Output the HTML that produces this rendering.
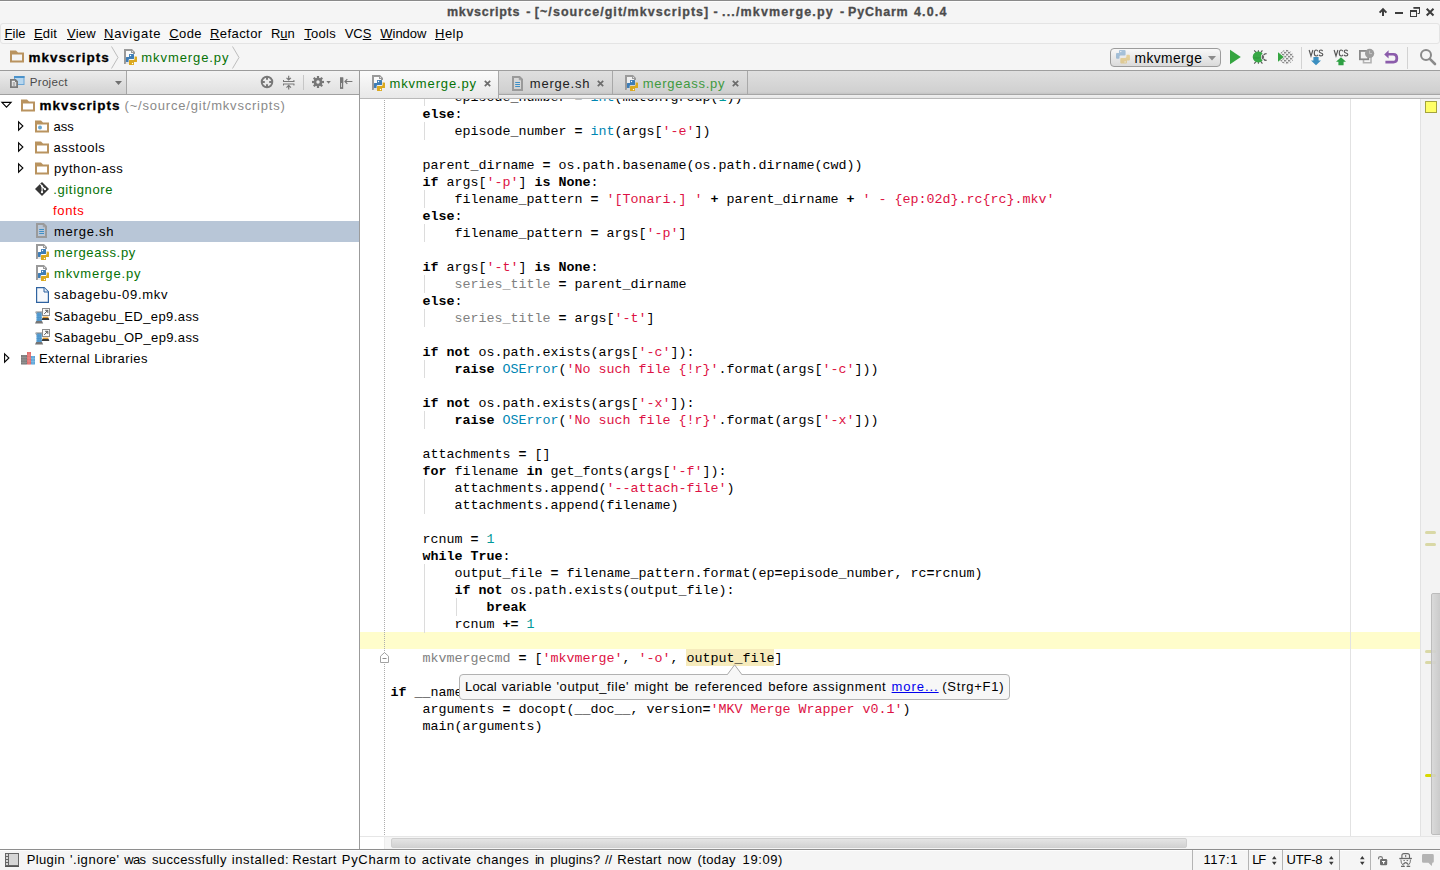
<!DOCTYPE html>
<html>
<head>
<meta charset="utf-8">
<title>mkvscripts - PyCharm 4.0.4</title>
<style>
html,body{margin:0;padding:0;}
body{width:1440px;height:870px;overflow:hidden;position:relative;background:#f5f5f5;font-family:"Liberation Sans",sans-serif;font-size:13px;color:#000;}
.abs{position:absolute;}
.t{position:absolute;white-space:nowrap;line-height:20px;height:20px;font-size:13px;}
.t.b{-webkit-text-stroke:0.3px;}
.b{font-weight:bold;}
svg{position:absolute;overflow:visible;}
/* title bar */
#titlebar{left:0;top:0;width:1440px;height:23px;background:linear-gradient(#fdfdfd 0,#fdfdfd 1px,#f5f5f5 1px);border-top:1px solid #8a8a8a;box-sizing:border-box;}
/* menubar */
#menubar{left:0;top:23px;width:1440px;height:21px;background:#f7f7f7;box-sizing:border-box;border:1px solid #e4e4e4;border-radius:3px;}
.mu{position:absolute;height:1px;background:#000;top:39px;}
/* navbar */
#navbar{left:0;top:44px;width:1440px;height:26px;background:#f5f5f5;}
/* tool header */
#toolhdr{left:0;top:70px;width:359px;height:25px;box-sizing:border-box;border-top:1px solid #9b9b9b;border-bottom:1px solid #a0a0a0;background:linear-gradient(#f3f3f3,#e0e0e0);}
#projbtn{left:0;top:71px;width:126px;height:23px;background:linear-gradient(#ececec,#d2d2d2);border-right:1px solid #a6a6a6;}
#tree{left:0;top:95px;width:359px;height:755px;background:#fff;}
#sel{left:0;top:221px;width:359px;height:21px;background:#b8c6d7;}
#treeborder{left:359px;top:70px;width:1px;height:780px;background:#9b9b9b;}
#tabbar{left:360px;top:70px;width:1080px;height:29px;box-sizing:border-box;border-top:1px solid #9e9e9e;background:linear-gradient(#dfdfdf 0,#d0d0d0 21px,#c2c2c2 23px);}
#tabline{left:360px;top:94px;width:1080px;height:1px;background:#a6a6a6;}
#tabstrip{left:360px;top:95px;width:1080px;height:3px;background:linear-gradient(#f0f0f0,#e6e6e6);}
#tabbot{left:360px;top:98px;width:1080px;height:1px;background:#b9b9b9;}
#acttab{left:360px;top:71px;width:139px;height:27px;background:linear-gradient(#fbfbfb,#e8e8e8);border-right:1px solid #a8a8a8;box-sizing:border-box;}
.tabsep{position:absolute;top:71px;width:1px;height:23px;background:#a8a8a8;}
#editor{left:360px;top:99px;width:1080px;height:737px;background:#fff;overflow:hidden;}
#hscroll{left:360px;top:836px;width:1080px;height:13px;background:linear-gradient(90deg,#fff 0,#fff 24px,#ececec 24px,#ececec 25px,#f5f5f5 25px);border-top:1px solid #e6e6e6;box-sizing:border-box;}
#hthumb{left:391px;top:838px;width:796px;height:10px;border-radius:2px;background:linear-gradient(#e4e4e4,#d2d2d2);border:1px solid #cfcfcf;box-sizing:border-box;}
#status{left:0;top:849px;width:1440px;height:21px;background:linear-gradient(#fdfdfd 0,#fdfdfd 1px,#f5f5f5 1px);border-top:1px solid #8e8e8e;box-sizing:border-box;}
.ssep{position:absolute;top:850px;width:1px;height:20px;background:#b4b4b4;}
/* editor internals (coords relative to page) */
#gutterdots{left:384px;top:99px;width:1px;height:736px;background:repeating-linear-gradient(transparent 0,transparent 1px,#adadad 1px,#adadad 2px);}
#rmargin{left:1350px;top:99px;width:1px;height:737px;background:#e2e2e2;}
#stripe{left:1420px;top:99px;width:20px;height:737px;background:#f3f3f3;border-left:1px solid #e2e2e2;box-sizing:border-box;}
#vthumb{left:1431px;top:593px;width:10px;height:242px;border-radius:2px 0 0 2px;background:linear-gradient(90deg,rgba(214,214,214,0.88),rgba(198,198,198,0.9));border:1px solid #bcbcbc;box-sizing:border-box;}
.mk{position:absolute;left:1425px;width:11px;height:3px;border-radius:1.5px;background:#d9d8a6;}
#caretrow{left:0;top:533px;width:1060px;height:17px;background:#fffdcb;}
.ig{position:absolute;width:1px;background:#dcdcdc;}
pre{margin:0;}
#code{left:30.6px;top:-10px;font-family:"Liberation Mono",monospace;font-size:13.33px;letter-spacing:0;line-height:17px;color:#000;white-space:pre;}
#code b{font-weight:bold;}
.s{color:#dd1144;}
.n{color:#009999;}
.bi{color:#0086b3;}
.u{color:#808080;}
.hl{background:#f6ebbc;}
#tip{left:459px;top:674px;width:551px;height:26px;box-sizing:border-box;background:#f7f7f7;border:1px solid #b2b2b2;border-radius:4px;}
</style>
</head>
<body>
<div id="titlebar" class="abs"></div>
<div id="menubar" class="abs"></div>
<div id="navbar" class="abs"></div>
<div id="toolhdr" class="abs"></div>
<div id="projbtn" class="abs"></div>
<div id="tree" class="abs"></div>
<div id="sel" class="abs"></div>
<div id="treeborder" class="abs"></div>
<div id="tabbar" class="abs"></div>
<div id="tabline" class="abs"></div>
<div id="tabstrip" class="abs"></div>
<div id="acttab" class="abs"></div>
<div id="tabbot" class="abs"></div>
<div class="tabsep" style="left:612px;"></div>
<div class="tabsep" style="left:747px;"></div>
<div id="editor" class="abs">
<div id="caretrow" class="abs"></div>
<div class="abs" style="left:326px;top:550px;width:88px;height:17px;background:#f6ebbc;"></div>
<div class="ig" style="left:64px;top:-11px;height:18px;"></div>
<div class="ig" style="left:64px;top:23px;height:18px;"></div>
<div class="ig" style="left:64px;top:91px;height:18px;"></div>
<div class="ig" style="left:64px;top:125px;height:18px;"></div>
<div class="ig" style="left:64px;top:176px;height:18px;"></div>
<div class="ig" style="left:64px;top:210px;height:18px;"></div>
<div class="ig" style="left:64px;top:261px;height:18px;"></div>
<div class="ig" style="left:64px;top:312px;height:18px;"></div>
<div class="ig" style="left:64px;top:380px;height:35px;"></div>
<div class="ig" style="left:64px;top:465px;height:69px;"></div>
<div class="ig" style="left:96px;top:499px;height:18px;"></div>
<pre id="code" class="abs">        episode_number <b>=</b> <span class="bi">int</span>(match.group(<span class="n">1</span>))
    <b>else</b>:
        episode_number <b>=</b> <span class="bi">int</span>(args[<span class="s">'-e'</span>])

    parent_dirname <b>=</b> os.path.basename(os.path.dirname(cwd))
    <b>if</b> args[<span class="s">'-p'</span>] <b>is None</b>:
        filename_pattern <b>=</b> <span class="s">'[Tonari.] '</span> <b>+</b> parent_dirname <b>+</b> <span class="s">' - {ep:02d}.rc{rc}.mkv'</span>
    <b>else</b>:
        filename_pattern <b>=</b> args[<span class="s">'-p'</span>]

    <b>if</b> args[<span class="s">'-t'</span>] <b>is None</b>:
        <span class="u">series_title</span> <b>=</b> parent_dirname
    <b>else</b>:
        <span class="u">series_title</span> <b>=</b> args[<span class="s">'-t'</span>]

    <b>if not</b> os.path.exists(args[<span class="s">'-c'</span>]):
        <b>raise</b> <span class="bi">OSError</span>(<span class="s">'No such file {!r}'</span>.format(args[<span class="s">'-c'</span>]))

    <b>if not</b> os.path.exists(args[<span class="s">'-x'</span>]):
        <b>raise</b> <span class="bi">OSError</span>(<span class="s">'No such file {!r}'</span>.format(args[<span class="s">'-x'</span>]))

    attachments <b>=</b> []
    <b>for</b> filename <b>in</b> get_fonts(args[<span class="s">'-f'</span>]):
        attachments.append(<span class="s">'--attach-file'</span>)
        attachments.append(filename)

    rcnum <b>=</b> <span class="n">1</span>
    <b>while True</b>:
        output_file <b>=</b> filename_pattern.format(ep<b>=</b>episode_number, rc<b>=</b>rcnum)
        <b>if not</b> os.path.exists(output_file):
            <b>break</b>
        rcnum <b>+=</b> <span class="n">1</span>

    <span class="u">mkvmergecmd</span> <b>=</b> [<span class="s">'mkvmerge'</span>, <span class="s">'-o'</span>, output_file]

<b>if</b> __name__ <b>==</b> <span class="s">'__main__'</span>:
    arguments <b>=</b> docopt(__doc__, version<b>=</b><span class="s">'MKV Merge Wrapper v0.1'</span>)
    main(arguments)
</pre>
</div>

<div id="gutterdots" class="abs"></div>
<div id="rmargin" class="abs"></div>
<div id="stripe" class="abs"></div>
<div class="mk" style="top:531px;"></div>
<div class="mk" style="top:543px;"></div>
<div class="mk" style="top:650px;"></div>
<div class="mk" style="top:661px;"></div>
<div class="mk" style="top:774px;background:#d8d800;"></div>
<div id="vthumb" class="abs"></div>
<div class="abs" style="left:1425px;top:101px;width:12px;height:12px;box-sizing:border-box;background:#ffff66;border:1px solid #a3a33d;"></div>
<div id="hscroll" class="abs"></div>
<div id="hthumb" class="abs"></div>
<div id="status" class="abs"></div>
<div class="ssep" style="left:1192px;"></div>
<div class="ssep" style="left:1248px;"></div>
<div class="ssep" style="left:1282px;"></div>
<div class="ssep" style="left:1339px;"></div>
<div class="ssep" style="left:1370px;"></div>
<!-- window controls -->
<svg style="left:1376px;top:4px;" width="64" height="16" viewBox="1376 4 64 16">
 <g fill="none" stroke="#3d3d3d" stroke-width="2">
  <path d="M1379.6 12.6 L1383 9.2 L1386.4 12.6"/><path d="M1383 10 V16"/>
  <path d="M1395 13 H1403"/>
  <path d="M1426.7 8.7 L1433.5 15.5 M1433.5 8.7 L1426.7 15.5"/>
 </g>
 <g fill="none" stroke="#3d3d3d">
  <path d="M1413.5 8 H1419.5 V13.5 H1417.5" stroke-width="1"/><path d="M1413.5 7.8 H1420" stroke-width="1.6"/>
  <rect x="1410.5" y="10.5" width="6" height="6" stroke-width="1"/><path d="M1410 11 H1417" stroke-width="2"/>
 </g>
</svg>
<!-- nav bar: folder, chevrons, python file -->
<svg style="left:10px;top:50px;" width="14" height="13" viewBox="0 0 14 13"><path d="M0 0.5 H6 L8 2.5 H14 V12.5 H0 Z M2 4.5 V10.5 H12 V4.5 Z" fill="#b9935f" fill-rule="evenodd"/></svg>
<svg style="left:110px;top:46px;" width="10" height="24" viewBox="0 0 10 24"><path d="M1.5 0.5 L8 11.5 L1.5 22.5" fill="none" stroke="#bdbdbd" stroke-width="1"/></svg>
<svg style="left:231px;top:46px;" width="10" height="24" viewBox="0 0 10 24"><path d="M1.5 0.5 L8 11.5 L1.5 22.5" fill="none" stroke="#bdbdbd" stroke-width="1"/></svg>
<svg width="0" height="0" style="left:-10px;top:-10px;"><defs>
 <g id="py">
  <path d="M0 15 V0 H8 L11 3 V5 H9 V4 H7 V2 H2 V15 Z" fill="#9a9a9a"/>
  <path d="M2 2 H7 V4 H9 V5 H5 V8 H2 Z" fill="#fff" fill-opacity="0.6"/>
  <rect x="8" y="2" width="1" height="1" fill="#fff" fill-opacity="0.7"/>
  <path d="M2 13 H5 V15 H1.4 Z" fill="#d8d8d8" fill-opacity="0.6"/>
  <path d="M5.6 5 H9.4 Q10 5 10 5.6 V9.4 Q10 10 9.4 10 H5.8 Q4.6 10 4.6 11.2 V12.4 Q4.6 13 4 13 H2.6 Q2 13 2 12.4 V8.6 Q2 8 2.6 8 H5 V5.6 Q5 5 5.6 5 Z" fill="#3e7db6"/>
  <circle cx="6.5" cy="6.5" r="0.7" fill="#fff"/>
  <path d="M10.6 7.6 H12.4 Q13 7.6 13 8.2 V12.4 Q13 13 12.4 13 H10 V15.4 Q10 16 9.4 16 H5.6 Q5 16 5 15.4 V11.6 Q5 11 5.6 11 H9.4 Q10.6 11 10.6 9.8 Z" fill="#dba91e"/>
  <circle cx="8.5" cy="14.5" r="0.7" fill="#fff"/>
 </g>
 <g id="folder"><path d="M0 0.5 H6 L8 2.5 H14 V12.5 H0 Z M2 4.5 V10.5 H12 V4.5 Z" fill="#b9935f" fill-rule="evenodd"/></g>
 <g id="tri-r"><path d="M0.6 0.8 L4.9 5 L0.6 9.2 Z" fill="none" stroke="#000" stroke-width="1.1"/></g>
 <g id="txtfile">
  <path d="M1 1 H7.5 L10 3.5 V14 H1 Z" fill="none" stroke="#9a9a9a" stroke-width="2" stroke-linejoin="miter"/>
  <path d="M7.3 1 V3.8 H10" fill="none" stroke="#9a9a9a" stroke-width="1"/>
  <path d="M3.2 6.5 H8 M3.2 8.5 H8 M3.2 10.5 H8" stroke="#3e8fc6" stroke-width="1"/>
 </g>
 <g id="spool">
  <path d="M1.5 4.2 H6.8 V14 H1.5 Z" fill="#5ea5d8"/>
  <path d="M3.2 4 V14 M5.1 4 V14 M1.5 7 H6.8 M1.5 9.5 H6.8 M1.5 12 H6.8" stroke="#4a8fc2" stroke-width="0.6"/>
  <path d="M0.6 4 H7.6 M0.6 4.8 L1.6 5.6 M7.6 4.8 L6.8 5.6" stroke="#7d7d7d" stroke-width="1"/>
  <path d="M1.2 13 L0 15.6 H8.2 L7 13 Z" fill="#757575"/>
  <rect x="7.5" y="0.5" width="7" height="7" fill="#fafafa" stroke="#8c8c8c" stroke-width="1"/>
  <path d="M9.3 5.8 L12.6 2.5 M10.2 2.3 H12.8 V4.9" fill="none" stroke="#555" stroke-width="1"/>
  <path d="M7.6 8.6 H13.4 V10.2 H7.6 Z" fill="#e0982e"/>
  <path d="M7.4 10 L6.6 12 H14.4 L13.6 10 Z" fill="#3a3a3a"/>
 </g>
 <g id="xclose"><path d="M0.8 0.8 L6.2 6.2 M6.2 0.8 L0.8 6.2" stroke="#6c6c6c" stroke-width="1.7" fill="none"/></g>
 <g id="updn"><path d="M0 3.2 L2.3 0 L4.6 3.2 Z M0 5.8 L2.3 9 L4.6 5.8 Z" fill="#3a3a3a"/></g>
</defs></svg>
<svg style="left:124px;top:49px;" width="14" height="16"><use href="#py"/></svg>
<!-- project view icon -->
<svg style="left:10px;top:76px;" width="15" height="12" viewBox="0 0 15 12">
 <rect x="4.5" y="0.5" width="9.5" height="8" fill="#b7d6ee" stroke="#6aa6d6" stroke-width="1"/>
 <rect x="4" y="0" width="10.5" height="2" fill="#4b92ca"/>
 <path d="M0.9 3.9 H5.4 L7.1 5.6 V11.1 H0.9 Z" fill="#efefef" stroke="#7a7a7a" stroke-width="1.8"/>
 <path d="M5 3.4 L7.6 6 H5 Z" fill="#7a7a7a"/>
 <path d="M2.7 7 H5.3 M2.7 9 H5.3" stroke="#7a7a7a" stroke-width="1"/>
</svg>
<svg style="left:115px;top:81px;" width="7" height="4" viewBox="0 0 7 4"><path d="M0 0 H7 L3.5 4 Z" fill="#707070"/></svg>
<!-- tool header icons -->
<svg style="left:260px;top:75px;" width="14" height="14" viewBox="0 0 14 14">
 <circle cx="7" cy="7" r="5.3" fill="none" stroke="#787878" stroke-width="1.9"/>
 <path d="M7 1.5 V4.8 M7 9.2 V12.5 M1.5 7 H4.8 M9.2 7 H12.5" stroke="#787878" stroke-width="2"/>
</svg>
<svg style="left:283px;top:75px;" width="13" height="15" viewBox="0 0 13 15">
 <path d="M0 6.5 H11.4 M0 9 H11.4" stroke="#787878" stroke-width="1"/>
 <path d="M0.5 5 V6.5 M10.9 5 V6.5 M0.5 9 V10.5 M10.9 9 V10.5" stroke="#787878" stroke-width="1"/>
 <path d="M5.7 0.8 V5 M3.5 2.8 L5.7 5 L7.9 2.8" fill="none" stroke="#787878" stroke-width="1.2"/>
 <path d="M5.7 14.4 V10.4 M3.5 12.6 L5.7 10.4 L7.9 12.6" fill="none" stroke="#787878" stroke-width="1.2"/>
</svg>
<div class="abs" style="left:303px;top:75px;width:1px;height:15px;background:#c6c6c6;"></div>
<svg style="left:312px;top:76px;" width="20" height="12" viewBox="0 0 20 12">
 <g transform="translate(6,6)" fill="#777">
  <circle r="4.3"/>
  <g id="teeth"><rect x="-1.1" y="-6" width="2.2" height="3"/><rect x="-1.1" y="3" width="2.2" height="3"/><rect x="-6" y="-1.1" width="3" height="2.2"/><rect x="3" y="-1.1" width="3" height="2.2"/></g>
  <use href="#teeth" transform="rotate(45)"/>
  <circle r="1.7" fill="#ececec"/>
 </g>
 <path d="M14.4 5 H18.8 L16.6 7.8 Z" fill="#777"/>
</svg>
<svg style="left:340px;top:76.5px;" width="13" height="12" viewBox="0 0 13 12">
 <rect x="0.6" y="1.1" width="2" height="10.2" fill="#e8e8e8" stroke="#777" stroke-width="1.2"/>
 <rect x="0" y="0.5" width="3.2" height="5.5" fill="#777"/>
 <path d="M5 4.5 H12.4 M7.3 2.2 L5 4.5 L7.3 6.8" fill="none" stroke="#777" stroke-width="1.2"/>
</svg>
<!-- tree arrows -->
<svg style="left:1px;top:101px;" width="11" height="7" viewBox="0 0 11 7"><path d="M0.9 1.4 H10.1 L5.5 6.2 Z" fill="none" stroke="#000" stroke-width="1.1"/></svg>
<svg style="left:18px;top:121px;" width="6" height="10"><use href="#tri-r"/></svg>
<svg style="left:18px;top:142px;" width="6" height="10"><use href="#tri-r"/></svg>
<svg style="left:18px;top:163px;" width="6" height="10"><use href="#tri-r"/></svg>
<svg style="left:4px;top:353px;" width="6" height="10"><use href="#tri-r"/></svg>
<!-- tree icons -->
<svg style="left:21px;top:98.5px;" width="14" height="13"><use href="#folder"/></svg>
<svg style="left:35px;top:119.5px;" width="14" height="13"><use href="#folder"/><circle cx="5" cy="7.6" r="2" fill="#6aa6cf"/></svg>
<svg style="left:35px;top:140.5px;" width="14" height="13"><use href="#folder"/></svg>
<svg style="left:35px;top:161.5px;" width="14" height="13"><use href="#folder"/></svg>
<svg style="left:35px;top:182px;" width="14" height="14" viewBox="0 0 14 14">
 <path d="M7 0 L14 7 L7 14 L0 7 Z" fill="#363636"/>
 <path d="M5.3 2.2 L7.1 4 V10 M7.2 4.4 L9.8 7" stroke="#fff" stroke-width="1.1" fill="none"/>
 <circle cx="7" cy="10.2" r="1.1" fill="#fff"/><circle cx="10" cy="7.2" r="1.1" fill="#fff"/><circle cx="7" cy="4.2" r="0.9" fill="#fff"/>
</svg>
<svg style="left:36px;top:223px;" width="11" height="15"><use href="#txtfile"/></svg>
<svg style="left:36px;top:244px;" width="14" height="16"><use href="#py"/></svg>
<svg style="left:36px;top:265px;" width="14" height="16"><use href="#py"/></svg>
<svg style="left:36px;top:287px;" width="13" height="16" viewBox="0 0 13 16">
 <path d="M0.6 0.6 H8.2 L12.4 4.8 V15.4 H0.6 Z" fill="#f7f9fc" stroke="#2f63a1" stroke-width="1.2"/>
 <path d="M8 0.8 V5 H12.2" fill="#e4ecf5" stroke="#2f63a1" stroke-width="1"/>
</svg>
<svg style="left:35px;top:308px;" width="16" height="16"><use href="#spool"/></svg>
<svg style="left:35px;top:329px;" width="16" height="16"><use href="#spool"/></svg>
<svg style="left:21px;top:352px;" width="14" height="13" viewBox="0 0 14 13">
 <rect x="0" y="3" width="6" height="9.5" fill="#7a7a7a"/><path d="M2 3 V12.5 M4 3 V12.5 M0 5.5 H6 M0 8 H6 M0 10.5 H6" stroke="#9a9a9a" stroke-width="0.6"/>
 <rect x="6" y="0" width="4" height="12.5" fill="#e06c6c"/><path d="M8 0 V12.5 M6 3 H10 M6 6 H10 M6 9 H10" stroke="#ee9a9a" stroke-width="0.6"/>
 <rect x="10" y="4" width="4" height="8.5" fill="#5ea5d8"/><path d="M12 4 V12.5 M10 6.5 H14 M10 9.5 H14" stroke="#8cc3ea" stroke-width="0.6"/>
</svg>
<!-- tab icons -->
<svg style="left:372px;top:75px;" width="14" height="16"><use href="#py"/></svg>
<svg style="left:512px;top:75.5px;" width="11" height="15"><use href="#txtfile"/></svg>
<svg style="left:625px;top:75px;" width="14" height="16"><use href="#py"/></svg>
<svg style="left:484px;top:80px;" width="7" height="7"><use href="#xclose"/></svg>
<svg style="left:597px;top:80px;" width="7" height="7"><use href="#xclose"/></svg>
<svg style="left:732px;top:80px;" width="7" height="7"><use href="#xclose"/></svg>
<!-- run config combo -->
<div class="abs" style="left:1110px;top:48px;width:111px;height:19px;box-sizing:border-box;border:1px solid #9c9c9c;border-radius:4px;background:linear-gradient(#f8f8f8,#dadada);"></div>
<svg style="left:1116px;top:50px;opacity:0.42;" width="15" height="14" viewBox="0 0 15 14">
 <path d="M4 0 H8.6 Q9.6 0 9.6 1 V4.6 Q9.6 5.6 8.6 5.6 H4.6 Q3.5 5.6 3.5 6.7 V8 Q3.5 8.8 2.7 8.8 H1 Q0 8.8 0 7.8 V4 Q0 3 1 3 H3 V1 Q3 0 4 0 Z" fill="#3f7fb8"/>
 <circle cx="4.8" cy="1.6" r="0.7" fill="#fff"/>
 <path d="M9.9 13.5 H5.3 Q4.3 13.5 4.3 12.5 V8.9 Q4.3 7.9 5.3 7.9 H9.3 Q10.4 7.9 10.4 6.8 V5.5 Q10.4 4.7 11.2 4.7 H12.9 Q13.9 4.7 13.9 5.7 V9.5 Q13.9 10.5 12.9 10.5 H10.9 V12.5 Q10.9 13.5 9.9 13.5 Z" fill="#dcab2c"/>
 <circle cx="9.1" cy="11.9" r="0.7" fill="#fff"/>
</svg>
<svg style="left:1208px;top:56px;" width="8" height="5" viewBox="0 0 8 5"><path d="M0 0 H8 L4 4.6 Z" fill="#8a8a8a"/></svg>
<!-- run -->
<svg style="left:1229px;top:49px;" width="13" height="16" viewBox="0 0 13 16"><path d="M1 0.8 L11.8 8 L1 15.2 Z" fill="#35a541"/></svg>
<!-- debug bug -->
<svg style="left:1252px;top:49px;" width="16" height="16" viewBox="0 0 16 16">
 <path d="M2.2 1.4 L4 3.4 M6.4 1.2 V3.2 M10.4 1.4 L9 3.4 M2.2 14.6 L4 12.6 M6.4 14.8 V12.8 M10.4 14.6 L9 12.6" stroke="#555" stroke-width="1.1" fill="none"/>
 <path d="M10.6 4.5 A5.6 5.5 0 1 0 10.6 11.5 A4.4 4.4 0 0 1 10.6 4.5 Z" fill="#38a846"/>
 <path d="M1 8 H8.6 V8.4 A5.2 5.2 0 0 1 1 8.4 Z" fill="#2f9a3d" opacity="0.6"/>
 <path d="M10.6 5.4 Q13.6 8 10.6 10.6 Q8.6 8 10.6 5.4 Z" fill="#666"/>
 <path d="M11.8 6 Q12.2 4.6 14.6 4.6 M11.8 10 Q12.2 11.4 14.6 11.4" stroke="#555" stroke-width="1.2" fill="none"/>
</svg>
<!-- coverage -->
<svg style="left:1277px;top:49px;" width="17" height="16" viewBox="0 0 17 16">
 <defs><pattern id="chk" width="4" height="4" patternUnits="userSpaceOnUse" patternTransform="translate(1.3,0.9)"><rect x="0" y="0" width="1.5" height="1.5" fill="#4d4d4d"/><rect x="2" y="2" width="1.5" height="1.5" fill="#4d4d4d"/></pattern></defs>
 <circle cx="9.4" cy="8" r="7.2" fill="url(#chk)"/>
 <path d="M0 2 L8 8 L0 14 Z" fill="#f5f5f5"/>
 <path d="M1 3.2 L6.8 8 L1 12.8 Z" fill="#35a541"/>
</svg>
<div class="abs" style="left:1301px;top:47px;width:1px;height:22px;background:#d2d2d2;"></div>
<div class="abs" style="left:1407px;top:47px;width:1px;height:22px;background:#d2d2d2;"></div>
<!-- VCS update / commit -->
<svg style="left:1308px;top:49px;" width="16" height="17" viewBox="0 0 16 17">
 <path d="M1.1 1 L3 7 L4.9 1 M9.9 2.3 Q9.3 1 8.2 1 Q6.3 1 6.3 4 Q6.3 7 8.2 7 Q9.3 7 9.9 5.7 M14.6 2.1 Q14 1 12.9 1 Q11.3 1 11.3 2.5 Q11.3 3.7 12.9 4 Q14.8 4.4 14.8 5.6 Q14.8 7 13 7 Q11.7 7 11.1 5.9" fill="none" stroke="#575757" stroke-width="1.15"/>
 <path d="M5.4 8 H10.6 V11.5 H13 L8 16.2 L3 11.5 H5.4 Z" fill="#3b8fc0"/>
</svg>
<svg style="left:1333px;top:49px;" width="16" height="17" viewBox="0 0 16 17">
 <path d="M1.1 1 L3 7 L4.9 1 M9.9 2.3 Q9.3 1 8.2 1 Q6.3 1 6.3 4 Q6.3 7 8.2 7 Q9.3 7 9.9 5.7 M14.6 2.1 Q14 1 12.9 1 Q11.3 1 11.3 2.5 Q11.3 3.7 12.9 4 Q14.8 4.4 14.8 5.6 Q14.8 7 13 7 Q11.7 7 11.1 5.9" fill="none" stroke="#575757" stroke-width="1.15"/>
 <path d="M8 8.2 L13 12.8 H10.6 V16.2 H5.4 V12.8 H3 Z" fill="#2ea043"/>
</svg>
<!-- history -->
<svg style="left:1359px;top:48px;" width="16" height="16" viewBox="0 0 16 16">
 <path d="M4.5 11 V14.7 H12 V9" fill="none" stroke="#b2b2b2" stroke-width="1.6"/>
 <rect x="0.9" y="2.9" width="8.4" height="8.4" fill="#f2f2f2" stroke="#8a8a8a" stroke-width="1.8"/>
 <circle cx="10.6" cy="5.4" r="4.6" fill="#9d9d9d"/>
 <path d="M10.6 2.6 V5.6 H13" fill="none" stroke="#c8c8c8" stroke-width="0.9"/>
</svg>
<!-- revert -->
<svg style="left:1384px;top:50px;" width="15" height="14" viewBox="0 0 15 14">
 <path d="M4.6 0.2 L0.2 4.4 L4.6 8.6 V5.6 H9 Q11.4 5.6 11.4 8.2 Q11.4 10.8 9 10.8 H1.4 V13.4 H9.4 Q14.2 13.4 14.2 8.2 Q14.2 3 9.4 3 H4.6 Z" fill="#8b5cab"/>
</svg>
<!-- search -->
<svg style="left:1419px;top:48px;" width="18" height="18" viewBox="0 0 18 18">
 <circle cx="7" cy="7" r="5" fill="none" stroke="#8a8a8a" stroke-width="2"/>
 <path d="M10.8 10.8 L16 16" stroke="#8a8a8a" stroke-width="2.6" stroke-linecap="round"/>
</svg>
<!-- status bar icons -->
<svg style="left:5px;top:853px;" width="15" height="14" viewBox="0 0 15 14">
 <rect x="0.5" y="0.5" width="13" height="12" fill="#d6d6d6" stroke="#666" stroke-width="1"/>
 <path d="M3.5 0.5 V12.5 M0.5 3.5 H3.5 M0.5 6.5 H3.5 M0.5 9.5 H3.5" stroke="#666" stroke-width="1"/>
 <path d="M0 13.5 H14" stroke="#555" stroke-width="1"/>
</svg>
<svg style="left:1272px;top:856px;" width="5" height="9"><use href="#updn"/></svg>
<svg style="left:1329px;top:856px;" width="5" height="9"><use href="#updn"/></svg>
<svg style="left:1360px;top:856px;" width="5" height="9"><use href="#updn"/></svg>
<svg style="left:1376px;top:852px;" width="64" height="16" viewBox="1376 852 64 16">
 <path d="M1378.6 859.2 V857.8 Q1378.6 856.6 1380.5 856.6 Q1382.4 856.6 1382.4 858 V859.2" fill="none" stroke="#757575" stroke-width="1.1"/>
 <rect x="1380" y="859" width="7.2" height="6.2" rx="1.2" fill="#6d6d6d"/>
 <path d="M1382 861 H1385.2 V862.1 H1384.2 V863.8 H1383 V862.1 H1382 Z" fill="#fff"/>
 <path d="M1401.9 858.2 V855.6 Q1401.9 853.6 1404 853.6 H1407.4 Q1409.5 853.6 1409.5 855.6 V858.2" fill="#f1f1f1" stroke="#686868" stroke-width="1.1"/>
 <path d="M1405.7 855 V857.2" stroke="#686868" stroke-width="1"/>
 <path d="M1399.3 858.5 H1411.9" stroke="#686868" stroke-width="1.3"/>
 <path d="M1400.9 859.6 Q1400.6 863.2 1403.4 865.6 M1410.5 859.6 Q1410.8 863.2 1408 865.6" fill="none" stroke="#777" stroke-width="1"/>
 <path d="M1403.4 860.6 H1404.9 M1406.6 860.6 H1408.1" stroke="#6e6e6e" stroke-width="1"/>
 <path d="M1403.3 864.4 Q1405.7 860.8 1408.1 864.4" fill="none" stroke="#686868" stroke-width="1.3"/>
 <path d="M1401 866.4 H1404.8 M1406.6 866.4 H1410.2" stroke="#686868" stroke-width="1.2"/>
 <path d="M1423.4 854 H1432.4 Q1433.8 854 1433.8 855.4 V861.4 Q1433.8 862.8 1432.4 862.8 H1432.3 L1431.8 866 L1428.4 862.8 H1423.4 Q1422 862.8 1422 861.4 V855.4 Q1422 854 1423.4 854 Z" fill="#b4b4b4"/>
</svg>
<!-- fold marker -->
<svg style="left:380px;top:652px;" width="9" height="11" viewBox="0 0 9 11">
 <path d="M0.5 10.5 V4.2 L4.5 0.6 L8.5 4.2 V10.5 Z" fill="#fff" stroke="#a2a2a2" stroke-width="1"/>
 <path d="M2.5 6.5 H6.5" stroke="#8c8c8c" stroke-width="1"/>
</svg>
<!-- tooltip -->
<div id="tip" class="abs"></div>
<svg style="left:726px;top:663px;" width="18" height="13" viewBox="726 663 18 13">
 <path d="M727.5 674.5 L734.6 664.8 L741.7 674.5 V675.6 H727.5 Z" fill="#f7f7f7"/>
 <path d="M727.3 674.6 L734.6 664.8 L741.9 674.6" fill="none" stroke="#a8a8a8" stroke-width="1"/>
</svg>
<div class="t b" style="left:446.90px;top:2.17px;font-size:12.5px;letter-spacing:0.716px;color:#4c4c4c;">mkvscripts</div>
<div class="t b" style="left:526.30px;top:2.17px;font-size:12.5px;letter-spacing:0.000px;color:#4c4c4c;">-</div>
<div class="t b" style="left:534.80px;top:2.17px;font-size:12.5px;letter-spacing:1.048px;color:#4c4c4c;">[~/source/git/mkvscripts]</div>
<div class="t b" style="left:713.50px;top:2.17px;font-size:12.5px;letter-spacing:0.000px;color:#4c4c4c;">-</div>
<div class="t b" style="left:722.00px;top:2.17px;font-size:12.5px;letter-spacing:1.155px;color:#4c4c4c;">.../mkvmerge.py</div>
<div class="t b" style="left:839.90px;top:2.17px;font-size:12.5px;letter-spacing:0.000px;color:#4c4c4c;">-</div>
<div class="t b" style="left:848.00px;top:2.17px;font-size:12.5px;letter-spacing:0.805px;color:#4c4c4c;">PyCharm</div>
<div class="t b" style="left:913.90px;top:2.17px;font-size:12.5px;letter-spacing:1.188px;color:#4c4c4c;">4.0.4</div>
<div class="t" style="left:4.50px;top:24.00px;font-size:13px;letter-spacing:0.028px;color:#000;"><u>F</u>ile</div>
<div class="t" style="left:34.00px;top:24.00px;font-size:13px;letter-spacing:0.137px;color:#000;"><u>E</u>dit</div>
<div class="t" style="left:67.00px;top:24.00px;font-size:13px;letter-spacing:0.215px;color:#000;"><u>V</u>iew</div>
<div class="t" style="left:104.00px;top:24.00px;font-size:13px;letter-spacing:0.746px;color:#000;"><u>N</u>avigate</div>
<div class="t" style="left:169.20px;top:24.00px;font-size:13px;letter-spacing:0.417px;color:#000;"><u>C</u>ode</div>
<div class="t" style="left:210.00px;top:24.00px;font-size:13px;letter-spacing:0.428px;color:#000;"><u>R</u>efactor</div>
<div class="t" style="left:271.00px;top:24.00px;font-size:13px;letter-spacing:-0.059px;color:#000;">R<u>u</u>n</div>
<div class="t" style="left:304.20px;top:24.00px;font-size:13px;letter-spacing:0.313px;color:#000;"><u>T</u>ools</div>
<div class="t" style="left:344.70px;top:24.00px;font-size:13px;letter-spacing:-0.030px;color:#000;">VC<u>S</u></div>
<div class="t" style="left:380.30px;top:24.00px;font-size:13px;letter-spacing:-0.030px;color:#000;"><u>W</u>indow</div>
<div class="t" style="left:435.00px;top:24.00px;font-size:13px;letter-spacing:0.498px;color:#000;"><u>H</u>elp</div>
<div class="t b" style="left:28.50px;top:47.82px;font-size:13.5px;letter-spacing:1.002px;color:#000;">mkvscripts</div>
<div class="t" style="left:141.30px;top:48.00px;font-size:13px;letter-spacing:0.918px;color:#067206;">mkvmerge.py</div>
<div class="t" style="left:29.80px;top:72.48px;font-size:11.6px;letter-spacing:0.256px;color:#4a4a4a;">Project</div>
<div class="t b" style="left:39.50px;top:95.82px;font-size:13.5px;letter-spacing:0.969px;color:#000;">mkvscripts</div>
<div class="t" style="left:124.60px;top:96.00px;font-size:13px;letter-spacing:0.792px;color:#8a8a8a;">(~/source/git/mkvscripts)</div>
<div class="t" style="left:53.50px;top:117.00px;font-size:13px;letter-spacing:0.035px;color:#000;">ass</div>
<div class="t" style="left:53.50px;top:138.00px;font-size:13px;letter-spacing:0.516px;color:#000;">asstools</div>
<div class="t" style="left:54.00px;top:159.00px;font-size:13px;letter-spacing:0.579px;color:#000;">python-ass</div>
<div class="t" style="left:53.20px;top:180.00px;font-size:13px;letter-spacing:0.650px;color:#067206;">.gitignore</div>
<div class="t" style="left:53.00px;top:201.00px;font-size:13px;letter-spacing:0.654px;color:#ff0000;">fonts</div>
<div class="t" style="left:54.00px;top:222.00px;font-size:13px;letter-spacing:0.763px;color:#000;">merge.sh</div>
<div class="t" style="left:54.00px;top:243.00px;font-size:13px;letter-spacing:0.688px;color:#067206;">mergeass.py</div>
<div class="t" style="left:54.00px;top:264.00px;font-size:13px;letter-spacing:0.848px;color:#067206;">mkvmerge.py</div>
<div class="t" style="left:54.00px;top:285.00px;font-size:13px;letter-spacing:0.726px;color:#000;">sabagebu-09.mkv</div>
<div class="t" style="left:54.00px;top:307.00px;font-size:13px;letter-spacing:0.415px;color:#000;">Sabagebu_ED_ep9.ass</div>
<div class="t" style="left:54.00px;top:328.00px;font-size:13px;letter-spacing:0.375px;color:#000;">Sabagebu_OP_ep9.ass</div>
<div class="t" style="left:39.00px;top:349.00px;font-size:13px;letter-spacing:0.432px;color:#000;">External Libraries</div>
<div class="t" style="left:389.50px;top:74.00px;font-size:13px;letter-spacing:0.848px;color:#067206;">mkvmerge.py</div>
<div class="t" style="left:529.80px;top:74.00px;font-size:13px;letter-spacing:0.791px;color:#222;">merge.sh</div>
<div class="t" style="left:642.80px;top:74.00px;font-size:13px;letter-spacing:0.728px;color:#3f9a3f;">mergeass.py</div>
<div class="t" style="left:1134.60px;top:48.72px;font-size:13.8px;letter-spacing:0.411px;color:#000;">mkvmerge</div>
<div class="t" style="left:26.70px;top:850.00px;font-size:13px;letter-spacing:0.359px;color:#000;">Plugin</div>
<div class="t" style="left:70.00px;top:850.00px;font-size:13px;letter-spacing:0.546px;color:#000;">'.ignore'</div>
<div class="t" style="left:124.30px;top:850.00px;font-size:13px;letter-spacing:-0.759px;color:#000;">was</div>
<div class="t" style="left:151.90px;top:850.00px;font-size:13px;letter-spacing:0.402px;color:#000;">successfully</div>
<div class="t" style="left:231.70px;top:850.00px;font-size:13px;letter-spacing:0.623px;color:#000;">installed:</div>
<div class="t" style="left:292.20px;top:850.00px;font-size:13px;letter-spacing:0.368px;color:#000;">Restart</div>
<div class="t" style="left:341.80px;top:850.00px;font-size:13px;letter-spacing:0.692px;color:#000;">PyCharm</div>
<div class="t" style="left:404.40px;top:850.00px;font-size:13px;letter-spacing:0.788px;color:#000;">to</div>
<div class="t" style="left:421.70px;top:850.00px;font-size:13px;letter-spacing:0.647px;color:#000;">activate</div>
<div class="t" style="left:476.40px;top:850.00px;font-size:13px;letter-spacing:0.525px;color:#000;">changes</div>
<div class="t" style="left:534.90px;top:850.00px;font-size:13px;letter-spacing:-0.888px;color:#000;">in</div>
<div class="t" style="left:550.30px;top:850.00px;font-size:13px;letter-spacing:0.215px;color:#000;">plugins?</div>
<div class="t" style="left:605.00px;top:850.00px;font-size:13px;letter-spacing:-0.112px;color:#000;">//</div>
<div class="t" style="left:617.20px;top:850.00px;font-size:13px;letter-spacing:0.368px;color:#000;">Restart</div>
<div class="t" style="left:667.40px;top:850.00px;font-size:13px;letter-spacing:-0.080px;color:#000;">now</div>
<div class="t" style="left:697.40px;top:850.00px;font-size:13px;letter-spacing:0.414px;color:#000;">(today</div>
<div class="t" style="left:742.60px;top:850.00px;font-size:13px;letter-spacing:0.574px;color:#000;">19:09)</div>
<div class="t" style="left:1203.40px;top:850.00px;font-size:13px;letter-spacing:0.641px;color:#000;">117:1</div>
<div class="t" style="left:1252.20px;top:850.00px;font-size:13px;letter-spacing:-1.230px;color:#000;">LF</div>
<div class="t" style="left:1286.50px;top:850.00px;font-size:13px;letter-spacing:-0.200px;color:#000;">UTF-8</div>
<div class="t" style="left:465.00px;top:677.00px;font-size:13px;letter-spacing:0.153px;color:#000;">Local</div>
<div class="t" style="left:501.70px;top:677.00px;font-size:13px;letter-spacing:0.601px;color:#000;">variable</div>
<div class="t" style="left:556.50px;top:677.00px;font-size:13px;letter-spacing:0.586px;color:#000;">'output_file'</div>
<div class="t" style="left:634.20px;top:677.00px;font-size:13px;letter-spacing:0.531px;color:#000;">might</div>
<div class="t" style="left:674.60px;top:677.00px;font-size:13px;letter-spacing:-0.530px;color:#000;">be</div>
<div class="t" style="left:694.70px;top:677.00px;font-size:13px;letter-spacing:0.609px;color:#000;">referenced</div>
<div class="t" style="left:768.20px;top:677.00px;font-size:13px;letter-spacing:0.514px;color:#000;">before</div>
<div class="t" style="left:812.80px;top:677.00px;font-size:13px;letter-spacing:0.715px;color:#000;">assignment</div>
<div class="t" style="left:891.60px;top:677.00px;font-size:13px;letter-spacing:0.943px;color:#0000ee;"><u>more...</u></div>
<div class="t" style="left:942.30px;top:677.00px;font-size:13px;letter-spacing:0.746px;color:#000;">(Strg+F1)</div>
</body>
</html>
